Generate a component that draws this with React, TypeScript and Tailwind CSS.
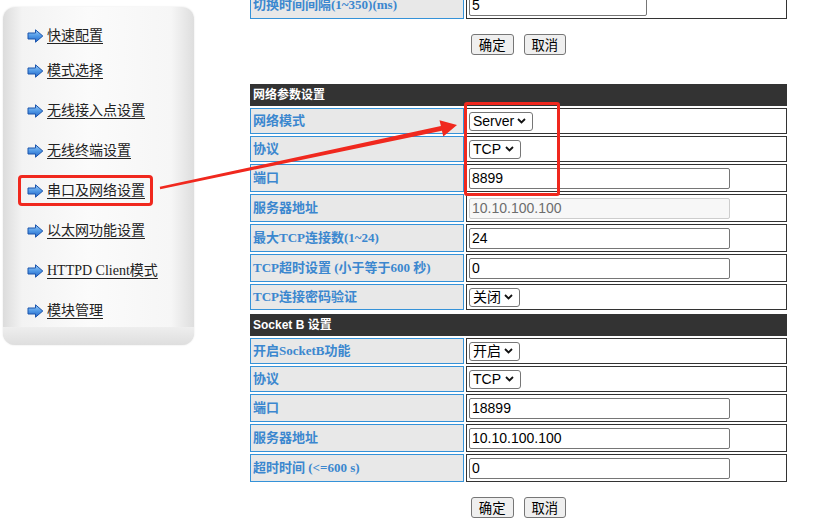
import type { ReactNode } from 'react'

const menu = [
  '快速配置',
  '模式选择',
  '无线接入点设置',
  '无线终端设置',
  '串口及网络设置',
  '以太网功能设置',
  'HTTPD Client模式',
  '模块管理',
]

function ArrowIcon({ id }: { id: string }) {
  return (
    <svg width="17" height="14" viewBox="0 0 17 14" className="shrink-0">
      <defs>
        <linearGradient id={id} x1="0" y1="0" x2="0" y2="1">
          <stop offset="0" stopColor="#9ccdf7" />
          <stop offset="0.5" stopColor="#4f98e6" />
          <stop offset="1" stopColor="#2466c8" />
        </linearGradient>
      </defs>
      <path d="M1 4 H8.5 V0.8 L15.8 7 L8.5 13.2 V10 H1 Z" fill={`url(#${id})`} stroke="#1b55ad" strokeWidth="1" strokeLinejoin="round" />
    </svg>
  )
}

function Sidebar() {
  return (
    <div className="ml-[3px] mt-[7px] flex h-[338px] w-[191px] shrink-0 flex-col rounded-[12px] bg-[linear-gradient(to_right,#dcdcdc_0%,#f3f3f3_10%,#fbfbfb_45%,#f6f6f6_88%,#dedede_100%)] shadow-[0_0_2px_rgba(0,0,0,0.12)]">
      <div className="flex-1 pl-[24px] pt-[19px]">
        {menu.map((m, i) => (
          <div
            key={m}
            className={`flex h-[20px] items-center gap-[3px] ${i === 0 ? '' : i === 1 ? 'mt-[15px]' : 'mt-[20px]'}`}
          >
            <ArrowIcon id={`ag${i}`} />
            <span className="text-[14px] leading-none text-[#222] underline underline-offset-[3px] font-['Liberation_Serif','Noto_Sans_CJK_SC',serif]">
              {m}
            </span>
          </div>
        ))}
      </div>
      <div className="h-[18px] rounded-b-[12px] bg-[linear-gradient(to_bottom,#eeeeee,#dedede)]" />
    </div>
  )
}

function Label({ children, h, top }: { children: ReactNode; h: string; top?: boolean }) {
  return (
    <div
      className={`${h} flex ${top ? 'items-start pt-[6px] leading-none' : 'items-center'} border border-[#3592d8] bg-[#e8e8e8] px-[2px] text-[13px] font-bold text-[#3b87cf] font-['Liberation_Serif','Noto_Sans_CJK_SC',serif]`}
    >
      {children}
    </div>
  )
}

function Cell({ children, h }: { children: ReactNode; h: string }) {
  return <div className={`${h} flex items-center border border-[#333] bg-white px-[2px]`}>{children}</div>
}

function Select({ value, w }: { value: string; w: string }) {
  return (
    <div className={`${w} flex h-[19px] items-center justify-between rounded-[3px] border border-[#767676] bg-white pl-[3px] pr-[6px] text-[14px] leading-none text-black font-['Liberation_Sans','Noto_Sans_CJK_SC',sans-serif]`}>
      <span>{value}</span>
      <svg width="9" height="6" viewBox="0 0 9 6">
        <path d="M1 1 L4.5 4.5 L8 1" fill="none" stroke="#111" strokeWidth="1.8" />
      </svg>
    </div>
  )
}

function Input({ value, disabled, w = 'w-[261px]' }: { value: string; disabled?: boolean; w?: string }) {
  return (
    <input
      readOnly
      value={value}
      className={`${w} h-[21px] rounded-[2px] border px-[2px] text-[14px] font-['Liberation_Sans',sans-serif] outline-none ${
        disabled ? 'border-[#cdcdcd] bg-[#f7f7f7] text-[#6d6d6d]' : 'border-[#767676] bg-white text-black'
      }`}
    />
  )
}

function Header({ children }: { children: ReactNode }) {
  return (
    <div className="col-span-2 flex h-[22px] items-center bg-[#333] px-[3px] text-[12px] font-bold text-white font-['Liberation_Sans','Noto_Sans_CJK_SC',sans-serif]">
      {children}
    </div>
  )
}

function Buttons({ className }: { className: string }) {
  const cls =
    "h-[21px] rounded-[3px] border border-[#767676] bg-[#efefef] px-[7px] text-[13.33px] leading-none text-black font-['Noto_Sans_CJK_SC',sans-serif]"
  return (
    <div className={`flex justify-center gap-[10px] ${className}`}>
      <button className={cls}>确定</button>
      <button className={cls}>取消</button>
    </div>
  )
}

type Row = { label: string; kind: 'select' | 'input'; value: string; w?: string; disabled?: boolean }

function Section({ title, rows }: { title: string; rows: Row[] }) {
  return (
    <div className="grid grid-cols-[214px_321px] gap-[2px] p-[2px]">
      <Header>{title}</Header>
      {rows.map((r, i) => {
        const h = r.kind === 'select' ? 'h-[26px]' : 'h-[28px]'
        return (
          <div key={i} className="contents">
            <Label h={h}>{r.label}</Label>
            <Cell h={h}>
              {r.kind === 'select' ? <Select value={r.value} w={r.w!} /> : <Input value={r.value} disabled={r.disabled} />}
            </Cell>
          </div>
        )
      })}
    </div>
  )
}

const net: Row[] = [
  { label: '网络模式', kind: 'select', value: 'Server', w: 'w-[64px]' },
  { label: '协议', kind: 'select', value: 'TCP', w: 'w-[52px]' },
  { label: '端口', kind: 'input', value: '8899' },
  { label: '服务器地址', kind: 'input', value: '10.10.100.100', disabled: true },
  { label: '最大TCP连接数(1~24)', kind: 'input', value: '24' },
  { label: 'TCP超时设置 (小于等于600 秒)', kind: 'input', value: '0' },
  { label: 'TCP连接密码验证', kind: 'select', value: '关闭', w: 'w-[51px]' },
]

const sockB: Row[] = [
  { label: '开启SocketB功能', kind: 'select', value: '开启', w: 'w-[51px]' },
  { label: '协议', kind: 'select', value: 'TCP', w: 'w-[52px]' },
  { label: '端口', kind: 'input', value: '18899' },
  { label: '服务器地址', kind: 'input', value: '10.10.100.100' },
  { label: '超时时间 (<=600 s)', kind: 'input', value: '0' },
]

function Main() {
  return (
    <div className="ml-[54px] mt-[-11px] w-[541px] shrink-0">
      <div className="grid grid-cols-[214px_321px] gap-[2px] p-[2px]">
        <Label h="h-[28px]" top>
          切换时间间隔(1~350)(ms)
        </Label>
        <Cell h="h-[28px]">
          <Input value="5" w="w-[178px]" />
        </Cell>
      </div>
      <Buttons className="mt-[13px]" />
      <div className="mt-[27px]">
        <Section title="网络参数设置" rows={net} />
        <Section title="Socket B 设置" rows={sockB} />
      </div>
      <Buttons className="mt-[13px]" />
    </div>
  )
}

function Annotations() {
  return (
    <>
      <div className="pointer-events-none absolute left-[18px] top-[175px] h-[31px] w-[135px] rounded-[4px] border-[3px] border-[#f0281e]" />
      <div className="pointer-events-none absolute left-[464px] top-[102px] h-[94px] w-[96px] rounded-[3px] border-[3px] border-[#f0281e]" />
      <svg className="pointer-events-none absolute left-0 top-0" width="819" height="527">
        <polygon
          points="160.2,189.2 441.9,130.7 443.3,136.6 457,125 439.5,120.2 440.9,125.9 159.8,186.8"
          fill="#f0281e"
        />
      </svg>
    </>
  )
}

export default function App() {
  return (
    <div className="relative h-[527px] w-[819px] overflow-hidden bg-white">
      <div className="flex items-start">
        <Sidebar />
        <Main />
      </div>
      <Annotations />
    </div>
  )
}
